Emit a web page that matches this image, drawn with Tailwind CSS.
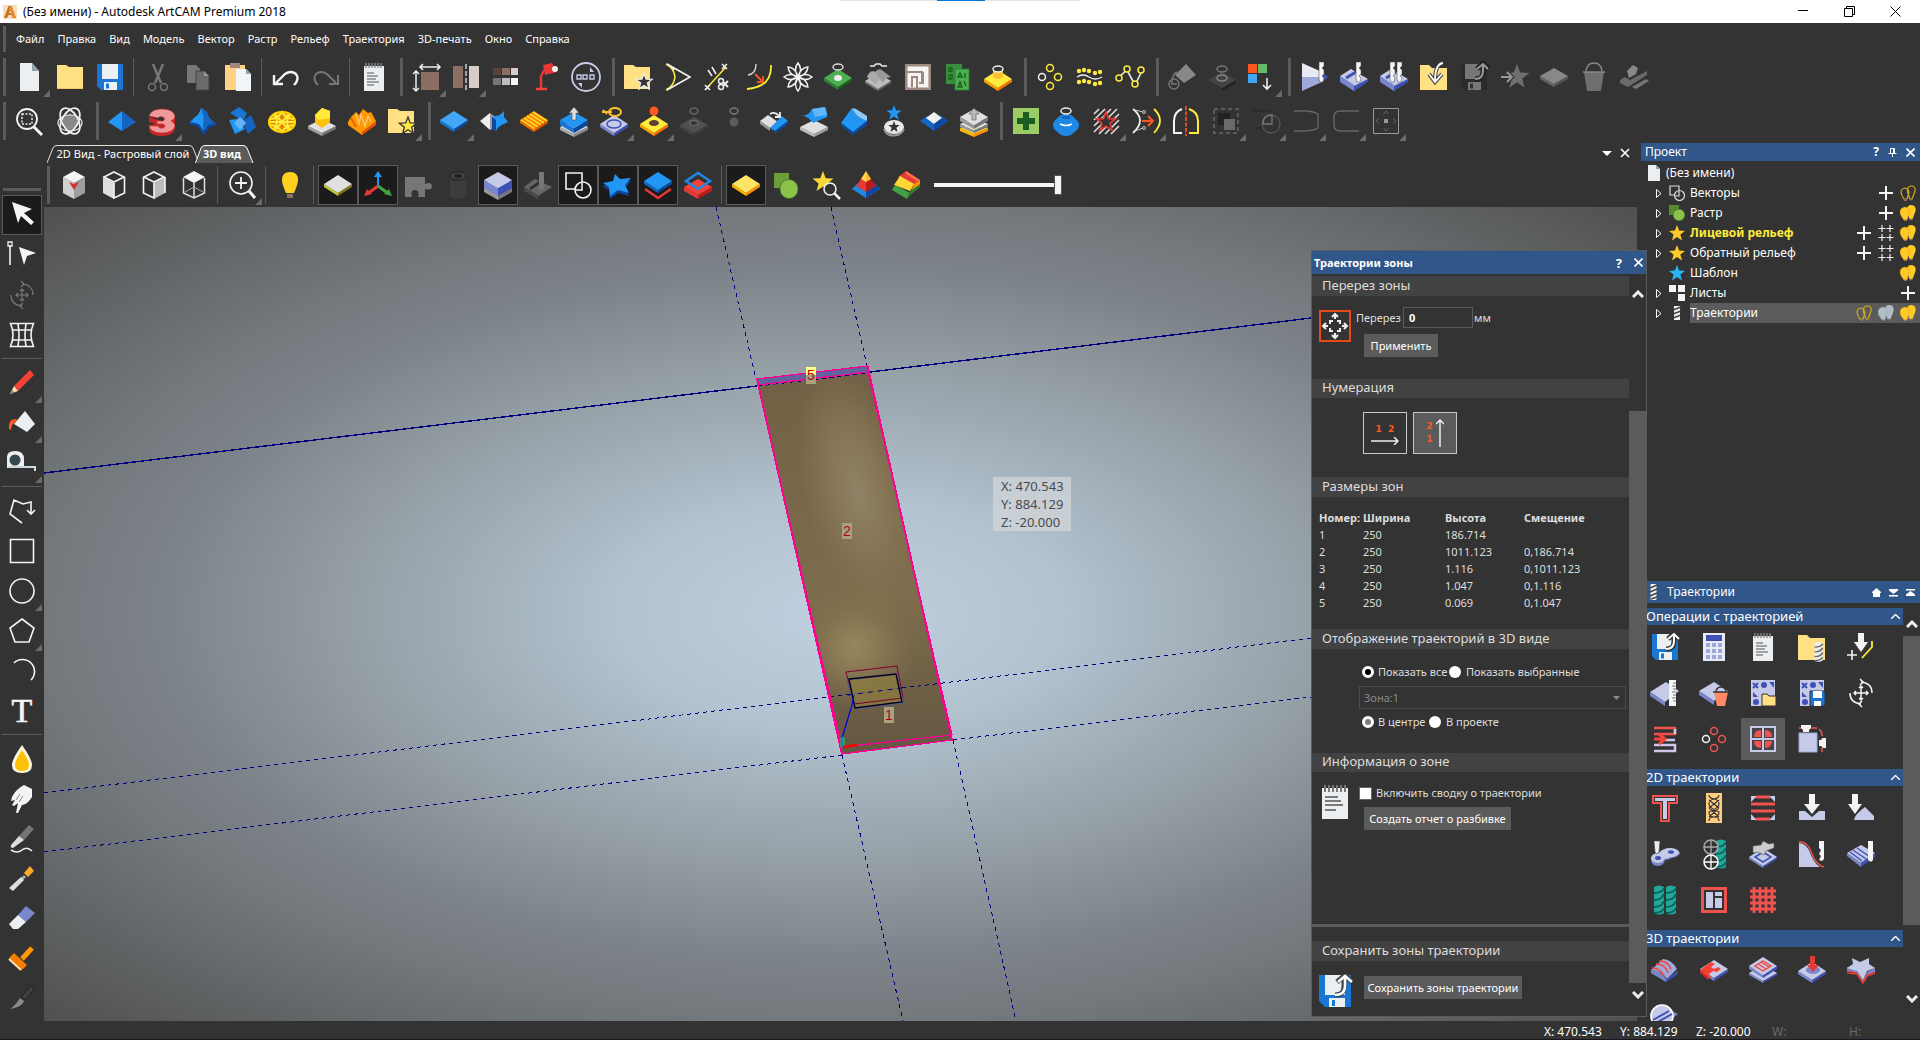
<!DOCTYPE html>
<html lang="ru">
<head>
  <meta charset="utf-8">
  <title>(Без имени) - Autodesk ArtCAM Premium 2018</title>
  <script src="https://cdn.jsdelivr.net/npm/@tailwindcss/browser@4"></script>
</head>
<body class="flex h-screen flex-col overflow-hidden bg-[#333333] font-['Noto_Sans',sans-serif] text-[11px] leading-4 text-white">

  <!-- title bar -->
  <header class="relative flex h-[23px] shrink-0 items-center bg-white pl-[3px] text-black">
    <svg class="size-[14px]" viewBox="0 0 14 14"><rect width="14" height="14" fill="#f8dcc0"/><path d="M1 13 5.500 1h3L13 13h-3.500L8.500 10H5.500L4 13z" fill="#c8701c"/><path d="M8.500 1 13 13H9.500L6 3z" fill="#e09038"/><path d="m6 8 1-3 1 3z" fill="#f8dcc0"/></svg>
    <h1 class="ml-[6px] text-[12px]">(Без имени) - Autodesk ArtCAM Premium 2018</h1>
    <div class="absolute top-0 left-[840px] flex h-px w-[241px] justify-center bg-[#e5e5e5]"><span class="h-px w-12 bg-[#0078d7]"></span></div>
    <div class="mr-[2px] ml-auto flex h-full">
      <button aria-label="Свернуть" class="grid w-[46px] place-items-center"><svg class="size-[11px]" viewBox="0 0 11 11" stroke="#000" fill="none"><path d="M0 4.500h10"/></svg></button>
      <button aria-label="Восстановить" class="grid w-[46px] place-items-center"><svg class="size-[11px]" viewBox="0 0 11 11" stroke="#000" fill="none"><path d="M.5 2.500h8v8h-8zM2.500 2.500v-2h8v8h-2"/></svg></button>
      <button aria-label="Закрыть" class="grid w-[46px] place-items-center"><svg class="size-[11px]" viewBox="0 0 11 11" stroke="#000" fill="none"><path d="m.5.500 10 10m0-10-10 10"/></svg></button>
    </div>
  </header>

  <!-- main menu -->
  <nav class="flex h-8 shrink-0 items-center">
    <span class="mr-1 ml-[3px] h-[26px] w-[3px] bg-[#5b5b5b]"></span>
    <div id="menu" class="flex gap-px"></div>
  </nav>

  <div id="bar-file" class="flex h-11 shrink-0 items-center"></div>
  <div id="bar-relief" class="flex h-11 shrink-0 items-center"></div>

  <main class="relative flex min-h-0 flex-1">

    <!-- tools -->
    <aside class="flex w-11 shrink-0 flex-col items-center pt-[45px]">
      <span class="mb-1 h-[3px] w-[38px] shrink-0 bg-[#5b5b5b]"></span>
      <div id="tools" class="flex flex-col items-center"></div>
    </aside>

    <!-- work area -->
    <section class="flex min-w-0 flex-1 flex-col">
      <div class="flex h-5 shrink-0 items-end pl-[3px]">
        <button class="relative h-[18px] w-[152px]">
          <svg class="absolute inset-0 h-full w-full" viewBox="0 0 152 18" fill="none" stroke="#e0e0e0"><path d="M0 18 6 3Q7 .5 10 .5H142Q145 .5 146 3L152 18"/></svg>
          <span class="relative block whitespace-nowrap leading-[18px]">2D Вид - Растровый слой</span>
        </button>
        <button class="relative -ml-[4px] h-[18px] w-[60px] font-bold">
          <svg class="absolute inset-0 h-full w-full" viewBox="0 0 60 18" fill="#5b5b5b" stroke="#fff"><path d="M.5 18 6 3Q7 .5 10 .5H48Q51 .5 52 3L58 18"/></svg>
          <span class="relative block whitespace-nowrap pr-[6px] leading-[18px]">3D вид</span>
        </button>
        <div class="mr-[7px] ml-auto flex h-5 items-center gap-2">
          <button aria-label="Список окон"><svg class="size-[10px]" viewBox="0 0 10 10" fill="#fff"><path d="M0 3h10L5 8z"/></svg></button>
          <button aria-label="Закрыть вид"><svg class="size-[10px]" viewBox="0 0 10 10" stroke="#fff" stroke-width="1.600"><path d="m1 1 8 8m0-8-8 8"/></svg></button>
        </div>
      </div>
      <div id="bar-view" class="flex h-11 shrink-0 items-center"></div>

      <div class="relative min-h-0 flex-1 bg-[radial-gradient(ellipse_farthest-corner_at_center,#c0d0e0_0%,#b2c2cf_20%,#90999f_47%,#7d838a_60%,#72787b_71%,#505050_100%)]">
        <svg class="absolute inset-0 h-full w-full" viewBox="44 207 1593 814" preserveAspectRatio="xMidYMid slice" font-family="Liberation Sans, sans-serif">
          <defs>
            <radialGradient id="shine" gradientUnits="userSpaceOnUse" cx="0" cy="0" r="1" gradientTransform="translate(858 492) rotate(-14) scale(55 130)"><stop offset="0" stop-color="#918166"/><stop offset=".5" stop-color="#857555"/><stop offset="1" stop-color="#857050" stop-opacity="0"/></radialGradient>
            <radialGradient id="shine2" gradientUnits="userSpaceOnUse" cx="855" cy="647" r="62"><stop offset="0" stop-color="#95875c"/><stop offset=".3" stop-color="#8b7c55"/><stop offset="1" stop-color="#857050" stop-opacity="0"/></radialGradient>
            <linearGradient id="wood" x1="0" y1="0" x2="0" y2="1"><stop offset="0" stop-color="#716045"/><stop offset=".6" stop-color="#7d6d4c"/><stop offset="1" stop-color="#645641"/></linearGradient>
          </defs>
          <path d="M757 379 868 366 952 740 842 754z" fill="url(#wood)"/>
          <path d="M757 379 868 366 952 740 842 754z" fill="url(#shine)"/>
          <path d="M757 379 868 366 952 740 842 754z" fill="url(#shine2)"/>
          <path d="m757 379 111-13 1 7-111 13z" fill="#62629c"/>
          <g stroke="#00007f" fill="none" shape-rendering="crispEdges">
            <path d="M44 473 757 386M870 372 1311 318" stroke-width="1.400"/>
            <path d="M716 207 756 379M831 207 867 366M842 755 903 1021M953 740 1016 1021M44 793 1311 638M44 852 842 755M953 740 1311 697M758 386 870 373" stroke-dasharray="4 4"/>
          </g>
          <g stroke="#ff0090" fill="none" stroke-width="1.300" shape-rendering="crispEdges">
            <path d="M757 379 867.500 366 952 740 842 754zM758 385 868 372 952 735M842 747 952 735M758 385 842 747" />
            <path d="M757 379 842 754M867.500 366 952 740" stroke-width="2"/>
          </g>
          <path d="m849 680 47-6 6 28-48 6z" fill="#8b7c40" fill-opacity=".8"/>
          <path d="m846 672 51-6 6 32-49 6z" stroke="#80002c" fill="none"/>
          <path d="m847 680 50-6 6 29-48 6z" stroke="#5c5c82" fill="none" stroke-width="1.500"/>
          <path d="m849 679 47-5 6 28-47 6z" stroke="#00001c" fill="none" stroke-width="1.300"/>
          <path d="m848 695 54-7" stroke="#00007f" stroke-dasharray="5 5"/>
          <path d="m854 695-2 10-10 33" stroke="#0000e0" fill="none" stroke-width="1.200"/>
          <path d="M841 738v9h3v-9z" fill="#00b060" stroke="#00e040"/>
          <path d="m843 747 14-2" stroke="#f00" stroke-width="2.500"/><path d="M842 736v11" stroke="#0060ff"/>
          <g font-size="14" text-anchor="middle" fill="#b00028">
            <rect x="806" y="367" width="10" height="8" fill="#ffff80"/><rect x="806" y="375" width="10" height="9" fill="#a6a27c"/>
            <text x="811" y="380">5</text>
            <rect x="842" y="523" width="10" height="16" fill="#a6a27c"/><text x="847" y="536">2</text>
            <rect x="884" y="707" width="10" height="16" fill="#a6a27c"/><text x="889" y="720">1</text>
          </g>
        </svg>
        <!-- cursor read-out -->
        <div class="absolute top-[270px] left-[949px] w-[78px] bg-[#d0d4d8]/80 pl-2 text-[13px] leading-[18px] text-[#4a4a4e]">
          <p>X: 470.543</p><p>Y: 884.129</p><p>Z: -20.000</p>
        </div>
      </div>
    </section>

    <!-- docked panels -->
    <aside class="ml-1 flex w-[279px] shrink-0 flex-col">
      <section class="h-[438px] shrink-0">
        <header class="flex h-[18px] items-center bg-[#315689] pl-1 text-[12px]">
          <h2>Проект</h2>
          <div class="mr-[5px] ml-auto flex items-center gap-[9px]">
            <button aria-label="Справка" class="font-bold">?</button>
            <button aria-label="Закрепить"><svg class="size-[9px]" viewBox="0 0 9 9" fill="none" stroke="#fff"><path d="M2.500 5.500v-5h4v5M5.500 1v4M.5 5.500h8M4.500 6v3"/></svg></button>
            <button aria-label="Закрыть"><svg class="size-[9px]" viewBox="0 0 9 9" stroke="#fff" stroke-width="1.600"><path d="m.5.500 8 8m0-8-8 8"/></svg></button>
          </div>
        </header>
        <ul id="tree" class="text-[12px]"></ul>
      </section>
      <section class="flex min-h-0 flex-1 flex-col">
        <header class="mb-[5px] flex h-[22px] shrink-0 items-center bg-[#315689] pl-[6px] text-[12px]">
          <svg class="size-4" viewBox="0 0 16 16"><rect x="3.500" width="6" height="16" rx="1" fill="#f4f4f4"/><path d="m3 4 7-3M3 8l7-3M3 12l7-3M4 15l6-2" stroke="#444" stroke-width="1.500"/></svg>
          <h2 class="ml-1">Траектории</h2>
          <div class="mr-[5px] ml-auto flex gap-2">
            <button aria-label="Домой"><svg class="size-[9px]" viewBox="0 0 9 9" fill="#fff"><path d="M4.500 0 9 4v1H8v4H1V5H0V4z"/></svg></button>
            <button aria-label="Свернуть все"><svg class="size-[9px]" viewBox="0 0 9 9" fill="#fff"><path d="M0 1h9v1.500L4.500 6 0 2.500zM0 7h9v1.500H0z"/></svg></button>
            <button aria-label="Развернуть все"><svg class="size-[9px]" viewBox="0 0 9 9" fill="#fff"><path d="M0 1h9v1.500H0zM4.500 3 9 6.500V8H0V6.500z"/></svg></button>
          </div>
        </header>
        <div class="flex min-h-0 flex-1">
          <div id="paths" class="min-w-0 flex-1 overflow-hidden"></div>
          <div class="flex w-[17px] flex-col items-center justify-between pt-3 pb-[18px]">
            <svg class="h-2 w-3 shrink-0" viewBox="0 0 12 8" fill="none" stroke="#eee" stroke-width="3"><path d="m1 7 5-5 5 5"/></svg>
            <span class="mt-2 mb-auto h-[289px] w-full bg-[#5b5b5b]"></span>
            <svg class="h-2 w-3 shrink-0" viewBox="0 0 12 8" fill="none" stroke="#eee" stroke-width="3"><path d="m1 1 5 5 5-5"/></svg>
          </div>
        </div>
      </section>
    </aside>

    <!-- zones window -->
    <form class="absolute top-[107px] right-[273px] bottom-[4px] flex w-[336px] flex-col border border-[#5b5b5b] bg-[#333333] text-[#dedede]">
      <header class="flex h-[23px] shrink-0 items-center bg-[#315689] pl-[2px] font-bold text-white">
        <h2>Траектории зоны</h2>
        <div class="mr-[3px] ml-auto flex items-center gap-3">
          <button type="button" aria-label="Справка" class="text-[13px]">?</button>
          <button type="button" aria-label="Закрыть"><svg class="size-[9px]" viewBox="0 0 9 9" stroke="#fff" stroke-width="1.600"><path d="m.5.500 8 8m0-8-8 8"/></svg></button>
        </div>
      </header>
      <div class="flex min-h-0 flex-1">
        <div class="flex min-w-0 flex-1 flex-col pt-[2px]">
          <section class="h-[103px] shrink-0">
            <h3 class="h-5 bg-[#424242] pl-[10px] text-[13px] leading-[18px]">Перерез зоны</h3>
            <div class="flex pt-[11px] pl-[7px]">
              <svg class="mt-[3px] size-8" viewBox="0 0 32 32" fill="none" stroke="#eee" stroke-width="2"><rect x="1" y="1" width="30" height="30" stroke="#e64a19"/><path d="M11 14v-3h3M18 11h3v3M21 18v3h-3M14 21h-3v-3M16 9V5M16 23v4M9 16H5M23 16h4M13 7l3-3 3 3M13 25l3 3 3-3M7 13l-3 3 3 3M25 13l3 3-3 3"/></svg>
              <div class="ml-[5px]">
                <div class="flex items-center">
                  <label for="overcut" class="w-[47px]">Перерез</label>
                  <input id="overcut" value="0" class="h-[21px] w-[70px] border border-[#5b5b5b] bg-[#333333] pl-[5px] font-bold text-white">
                  <span class="ml-px">мм</span>
                </div>
                <button type="button" class="mt-[6px] ml-2 h-[23px] w-[74px] bg-[#5b5b5b] text-white">Применить</button>
              </div>
            </div>
          </section>
          <section class="h-[98px] shrink-0">
            <h3 class="h-[19px] bg-[#424242] pl-[10px] text-[13px] leading-[17px]">Нумерация</h3>
            <div class="flex gap-[6px] pt-[14px] pl-[51px] font-['DejaVu_Sans',sans-serif] font-bold text-[#ff5722]">
              <button type="button" class="flex h-[42px] w-11 flex-col items-center border border-[#c8c8c8] pt-2 text-[9px] leading-4">1&nbsp; 2
                <svg class="h-2 w-7" viewBox="0 0 28 8" fill="none" stroke="#eee" stroke-width="1.500"><path d="M0 4h27m-4-4 4 4-4 4"/></svg></button>
              <button type="button" class="flex h-[42px] w-11 items-center justify-center gap-[3px] border border-[#c8c8c8] bg-[#5b5b5b] text-[9px] leading-[13px]"><span>2<br>1</span>
                <svg class="h-7 w-2" viewBox="0 0 8 28" fill="none" stroke="#eee" stroke-width="1.500"><path d="M4 28V1M0 5l4-4 4 4"/></svg></button>
            </div>
          </section>
          <section class="h-[152px] shrink-0">
            <h3 class="h-5 bg-[#424242] pl-[10px] text-[13px] leading-[18px]">Размеры зон</h3>
            <table class="mt-3 ml-[7px] text-left leading-[17px]">
              <thead><tr><th class="w-11">Номер:</th><th class="w-[82px]">Ширина</th><th class="w-[79px]">Высота</th><th>Смещение</th></tr></thead>
              <tbody>
                <tr><td>1</td><td>250</td><td>186.714</td><td></td></tr>
                <tr><td>2</td><td>250</td><td>1011.123</td><td>0,186.714</td></tr>
                <tr><td>3</td><td>250</td><td>1.116</td><td>0,1011.123</td></tr>
                <tr><td>4</td><td>250</td><td>1.047</td><td>0,1.116</td></tr>
                <tr><td>5</td><td>250</td><td>0.069</td><td>0,1.047</td></tr>
              </tbody>
            </table>
          </section>
          <section class="h-[124px] shrink-0">
            <h3 class="h-5 bg-[#424242] pl-[10px] text-[13px] leading-[18px]">Отображение траекторий в 3D виде</h3>
            <div class="flex items-center pt-[15px] pl-[50px]">
              <input type="radio" name="show" id="show-all" checked class="size-3 appearance-none rounded-full bg-white checked:border-[3px] checked:border-white checked:bg-black">
              <label for="show-all" class="w-[75px] pl-1 whitespace-nowrap">Показать все</label>
              <input type="radio" name="show" id="show-sel" class="size-3 appearance-none rounded-full bg-white checked:border-[3px] checked:border-white checked:bg-black">
              <label for="show-sel" class="pl-[5px]">Показать выбранные</label>
            </div>
            <div class="relative mt-[6px] ml-[47px] w-[267px]">
              <select aria-label="Зона" disabled class="h-[23px] w-full appearance-none border border-[#4a4a4a] bg-[#333333] pl-1 text-[#8a8a8a]"><option>Зона:1</option></select>
              <svg class="absolute top-[10px] right-[6px] h-1 w-[7px]" viewBox="0 0 7 4" fill="#8a8a8a"><path d="M0 0h7L3.500 4z"/></svg>
            </div>
            <div class="flex items-center pt-[5px] pl-[50px]">
              <input type="radio" name="place" id="center" checked class="size-3 appearance-none rounded-full border-[3px] border-white bg-[#7a7a7a]">
              <label for="center" class="w-[55px] pl-1 whitespace-nowrap">В центре</label>
              <input type="radio" name="place" id="project" class="size-3 appearance-none rounded-full bg-white">
              <label for="project" class="pl-[5px]">В проекте</label>
            </div>
          </section>
          <section class="min-h-0 flex-1">
            <h3 class="h-[19px] bg-[#424242] pl-[10px] text-[13px] leading-[17px]">Информация о зоне</h3>
            <div class="flex pt-[13px] pl-[10px]">
              <svg class="h-[34px] w-[26px]" viewBox="0 0 26 34"><path d="M0 3h26v31H0z" fill="#eceff1"/><path d="M3 0v7m4-7v7m4-7v7m4-7v7m4-7v7m4-7v7" stroke="#777" stroke-width="2"/><path d="M3 12h13M3 16h16M3 20h18M3 25h11" stroke="#555" stroke-width="1.400"/></svg>
              <div class="ml-[11px]">
                <div class="flex items-center">
                  <input type="checkbox" id="summary" class="size-[13px] appearance-none border border-[#666] bg-white">
                  <label for="summary" class="pl-1">Включить сводку о траектории</label>
                </div>
                <button type="button" class="mt-[6px] ml-[5px] h-[23px] w-[147px] bg-[#5b5b5b] whitespace-nowrap text-white">Создать отчет о разбивке</button>
              </div>
            </div>
          </section>
          <section class="h-[92px] shrink-0 border-t-[3px] border-[#5b5b5b] pt-[14px]">
            <h3 class="h-5 bg-[#424242] pl-[10px] text-[13px] leading-[18px]">Сохранить зоны траектории</h3>
            <div class="flex pt-[13px] pl-[7px]">
              <svg class="h-[33px] w-[34px]" viewBox="0 0 34 33"><path d="M0 1h32v32H6l-6-6z" fill="#1976d2"/><path d="M6 1h20v20H6z" fill="#eceff1"/><path d="M10 24h16v9H10z" fill="#eceff1"/><path d="M13 26h3v6h-3z" fill="#1976d2"/><path d="M16 21c7 0 9-3 9-9V6M18 8l8-7 7 7" fill="none" stroke="#444" stroke-width="5"/><path d="M16 21c7 0 10-3 10-9V3M19 8l7-6 7 6" fill="none" stroke="#fff" stroke-width="2.500"/></svg>
              <button type="button" class="mt-[2px] ml-[11px] h-[23px] w-[158px] bg-[#5b5b5b] whitespace-nowrap text-white">Сохранить зоны траектории</button>
            </div>
          </section>
        </div>
        <div class="flex w-[17px] flex-col items-center pt-[16px]">
          <svg class="mb-[113px] h-2 w-3 shrink-0" viewBox="0 0 12 8" fill="none" stroke="#eee" stroke-width="3"><path d="m1 7 5-5 5 5"/></svg>
          <span class="min-h-0 w-full flex-1 bg-[#5b5b5b]"></span>
          <svg class="mt-[8px] mb-[17px] h-2 w-3 shrink-0" viewBox="0 0 12 8" fill="none" stroke="#eee" stroke-width="3"><path d="m1 1 5 5 5-5"/></svg>
        </div>
      </div>
    </form>
  </main>

  <footer class="flex h-[19px] shrink-0 items-center justify-end border-b border-[#1c1420] pt-1 text-[12px]">
    <span class="w-[76px]">X: 470.543</span><span class="w-[76px]">Y: 884.129</span><span class="w-[76px]">Z: -20.000</span>
    <span class="w-[77px] text-[#6a6a6a]">W:</span><span class="w-[71px] text-[#6a6a6a]">H:</span>
  </footer>

  <script>
    // ---- drawing helpers, every icon lives in a 32x32 box ----
    const P = (d, fill, extra = '') => `<path d="${d}" fill="${fill}" ${extra}/>`
    const L = (d, stroke, w = 1.5, extra = '') => `<path d="${d}" fill="none" stroke="${stroke}" stroke-width="${w}" ${extra}/>`
    const C = (x, y, r, fill, stroke = 'none', w = 1.5) => `<circle cx="${x}" cy="${y}" r="${r}" fill="${fill}" stroke="${stroke}" stroke-width="${w}"/>`
    const E = (x, y, rx, ry, fill, stroke = 'none', w = 1.5) => `<ellipse cx="${x}" cy="${y}" rx="${rx}" ry="${ry}" fill="${fill}" stroke="${stroke}" stroke-width="${w}"/>`
    const slab = (x, y, w, h, t, top, left, right) =>
      P(`M${x - w} ${y}L${x} ${y + h}v${t}L${x - w} ${y + t}z`, left) +
      P(`M${x + w} ${y}L${x} ${y + h}v${t}L${x + w} ${y + t}z`, right) +
      P(`M${x} ${y - h}L${x + w} ${y} ${x} ${y + h} ${x - w} ${y}z`, top)
    const starPath = (x, y, r, k = 0.42, n = 5) => {
      let d = ''
      for (let i = 0; i < n * 2; i++) {
        const a = Math.PI * i / n - Math.PI / 2, q = i % 2 ? r * k : r
        d += (i ? 'L' : 'M') + (x + q * Math.cos(a)).toFixed(1) + ' ' + (y + q * Math.sin(a)).toFixed(1)
      }
      return d + 'z'
    }
    const folder = P('M2 4h9l3 3h15v22H2z', '#ffe082')
    const floppy = (a, b) => P('M3 3h26v26H7l-4-4z', a) + P('M8 3h16v15H8z', b) + P('M10 21h13v8H10z', b) + P('M12 22.500h3v5h-3z', a)
    const arrowUp = (c, o) => L('M17 18c6 0 8-3 8-8V4M19 8l6-6 6 6', o, 5) + L('M17 18c6 0 8-3 8-8V4M19 8l6-5 5 5', c, 2)
    const cube = (t, l, r) => P('M16 2 27 8 16 14 5 8z', t) + P('M5 8 16 14V30L5 24z', l) + P('M27 8 16 14V30L27 24z', r)
    const plate = '#c5cae9', plateD = '#7986cb', blue = '#3f51b5', red = '#ef5350'
    const mill = (x) => P(`M${x} 1h5v4l-2 2 2 2v4l-2 2 2 2-1 4h-3l-1-3z`, '#f4f4f4', 'stroke="#444" stroke-width=".5"')
    const helix = (x, a, b) => P(`M${x} 3q5-3 10 0v26q-5 3-10 0z`, a) + L(`M${x} 9q8 0 10-5M${x} 16q8 0 10-6M${x} 23q8 0 10-6M${x} 29q8 0 10-5`, b, 2)
    const grid9 = P('M4 3h24v26H4z', plate) + L('m6 6 5 5m0-5-5 5', blue, 2) + C(17, 8, 3, blue) + P('M22 5h5v6z', blue) + P('M6 15v5h5z', blue) + C(9, 25, 3, blue)

    const icons = {
      doc: P('M6 2h12l7 8v20H6z', '#eceff1') + P('M18 2v8h7z', '#90a4ae'),
      folder: P('M3 4h9l3 2h14v22H3z', '#ffe082') + L('M3 27.500h26', '#f0c868', 1),
      save: floppy('#1976d2', '#eceff1'),
      cut: L('M11 3 19 22M21 3 13 22', '#777', 2.5) + C(10, 26, 3.5, 'none', '#777', 1.5) + C(22, 26, 3.5, 'none', '#777', 1.5),
      copy: P('M5 4h9l4 4v14H5z', '#777') + P('M14 10h8l5 5v14H14z', '#6a6a6a', 'stroke="#444"') + P('M22 10v5h5z', '#999'),
      paste: P('M3 4h20v25H3z', '#ffd180') + P('M8 2h10v5H8z', '#a1887f') + P('M14 8h10l5 5v17H14z', '#f1f4f8') + P('M24 8v5h5z', '#90a4ae'),
      undo: L('M24 24q6-6 2-11-5-4-11 0l-9 9M4 14v9h9', '#f4f4f4', 2.4),
      redo: L('M8 24q-6-6-2-11 5-4 11 0l9 9M28 14v9h-9', '#777', 2),
      notes: P('M6 5h20v25H6z', '#eceff1') + L('M8 2v5m3-5v5m3-5v5m3-5v5m3-5v5m3-5v5', '#888', 1.4) + L('M9 12h7M9 15h11M9 18h9M9 21h12M9 24h7', '#555', 1.2),
      resize: P('M11 11h18v18H11z', '#8d6e63') + L('M11 6h18M13 3l-3 3 3 3M27 3l3 3-3 3M6 11v18M3 13l3-3 3 3M3 27l3 3 3-3', '#eee', 1.5),
      mirror: P('M3 5h10v22H3z', '#8d6e63') + P('M19 5h10v22H19z', '#d7ccc8') + L('M16 3v27', '#ccc', 1.5, 'stroke-dasharray="5 2"'),
      palette: P('M3 7h8v7H3z', '#5d4037') + P('M12 7h8v7h-8z', '#8d6e63') + P('M21 7h7v7h-7z', '#d7ccc8') + P('M3 17h8v7H3z', '#757575') + P('M12 17h8v7h-8z', '#bdbdbd') + P('M21 17h7v7h-7z', '#f5f5f5'),
      lamp: P('m13 4 9-2 5 9-12 3z', '#e53935') + C(25, 8, 3, '#eee') + L('M15 8 11 15V27', '#e53935', 2.5) + L('M6 28h11', '#f44336', 2.5),
      badge: C(16, 16, 14, 'none', '#c5cae9', 1.8) + L('M7 14h4v4H7zM13 14h4v4h-4zM20 14h4v4h-4z', '#c5cae9', 1.4) + P('M20 6v5h4zM12 27v-5H8z', '#c5cae9'),
      folderStar: P('M2 4h9l3 2h14v22H2z', '#ffe082') + P(starPath(22, 21, 8.500), '#333', 'stroke="#eee" stroke-width="1.300"'),
      fork: L('M4 3q8 4 9 13Q12 25 4 29', '#ffeb3b', 1.6) + L('M5 3 28 16 5 29M5 3q6 3 7 6', '#f4f4f4', 1.6),
      trim: L('M3 29 24 6', '#ffeb3b', 1.5) + L('M6 9l4 6M10 6l4 7M20 3l5 5m0-5-5 5M3 24l5 5m0-5-5 5', '#eee', 1.6) + C(19, 20, 2.500, 'none', '#eee') + C(19, 26, 2.500, 'none', '#eee') + L('m21 21 5 5m0-6-5 5', '#eee', 2),
      fillet: L('M29 4q1 22-24 24', '#ffeb3b', 1.8) + L('M6 14q8-1 8-11', '#ccc', 1.5) + L('m13 13 8 8m0-6v6h-6', '#ff5722', 1.8),
      flower: L([0, 45, 90, 135, 180, 225, 270, 315].map(a => { const r = a * Math.PI / 180, c = Math.cos(r), s = Math.sin(r), f = (u, v) => (16 + u * c - v * s).toFixed(1) + ' ' + (16 + u * s + v * c).toFixed(1); return `M16 16Q${f(8, 5)} ${f(14, 0)}Q${f(8, -5)} 16 16` }).join(''), '#f4f4f4', 1.500),
      greenRing: slab(16, 17, 14, 9, 3, '#4caf50', '#2e7d32', '#1b5e20') + E(16, 17, 4, 3, '#eee') + E(16, 6, 5, 3, 'none', '#ddd', 1.4),
      bumps: slab(16, 20, 13, 8, 2, '#bdbdbd', '#757575', '#616161') + P('M5 16Q8 8 14 11l8 6q-5-1-8 7z', '#aaa') + P('M13 11q4-5 8-1l8 6q-6 0-8 6z', '#999') + L('M8 5h4l2-2h4l2 2h5', '#eee', 1.5),
      maze: P('M3 3h26v26H3z', '#a1887f') + P('M5.500 5.500h21v21h-21z', '#f5f5f5') + L('M5 11h15v10M15 11v0M10 26V16h5v11M21 11v11h-4M26 11h0', '#a1887f', 2),
      cards: P('M4 3h16v20H4z', '#388e3c') + P('M13 8h14v21H13z', '#4caf50', 'stroke="#2e7d32"') + L('m16 16 2-4 2 4zM23 12v5M16 26l2-5 2 5zM22 20l2 5M7 7h3v3H7zM7 14h3v4H7z', '#1b5e20', 1.4),
      yellowRing: slab(16, 18, 14, 9, 3, '#ffeb3b', '#ffa000', '#ff6f00') + P('M11 9v7q5 4 10 0V9z', '#fbc02d') + E(16, 8, 5, 3, '#333', '#eee', 1.5),
      rings: C(16, 7, 3.500, 'none', '#ffeb3b') + C(8, 16, 3.500, 'none', '#f4f4f4') + C(24, 16, 3.500, 'none', '#ffeb3b') + C(16, 25, 3.500, 'none', '#ffeb3b'),
      wave: [5, 10, 15, 21, 26].map((x, i) => { const o = [0, -1, 0, 2, 1][i]; return C(x, 10 + o, 2.200, '#ffeb3b') + C(x, 21 + o, 2.200, '#ffeb3b') }).join('') + L('M3 16q6-4 12 0t13 0', '#eee', 1.4),
      zigzag: L('M5 16 13 9 21 24 28 10', '#eee', 1.6) + C(5, 17, 3, '#333', '#ffeb3b') + C(13, 8, 3, '#333', '#ffeb3b') + C(21, 23, 3, '#333', '#ffeb3b') + C(27, 9, 3, '#333', '#ffeb3b'),
      fillDim: P('M20 3 30 14 18 22 9 14z', '#888') + L('M11 11q-5 2-5 11', '#777', 1.5) + C(8, 23, 5, 'none', '#777') + L('M5 23h6', '#777', 1.5),
      ringDim: slab(16, 19, 14, 8, 3, '#444', '#333', '#222') + E(16, 17, 5, 3, 'none', '#888') + E(16, 8, 5, 3, 'none', '#777'),
      swatches: P('M2 3h9v9H2z', '#ff5722') + P('M12 3h9v9h-9z', '#66bb6a') + P('M2 13h9v9H2z', '#42a5f5') + L('M21 17v11m-4-4 4 4 4-4', '#eee', 1.6),
      cone: P('M4 2 24 11v5H4z', '#e8eaf6') + P('M4 30 24 21v-5H4z', '#9fa8da') + P('M24 11l6 5-6 5z', '#3f51b5') + mill(21),
      slab1: P('M2 15 13 8l17 10-13 8z', plate) + P('M2 15v6l14 9V24z', plateD) + P('M30 18v3L16 30v-5z', blue) + L('m8 17 10-6', blue, 3) + mill(18),
      slab2: P('M2 15 13 8l17 10-13 8z', plate) + P('M2 15v6l14 9V24z', plateD) + P('M30 18v3L16 30v-5z', blue) + L('m8 17 10-6', blue, 3) + mill(12) + mill(19),
      folderIn: folder + L('M25 2q-8 1-8 18m-6-7 6 8 7-8', '#444', 4) + L('M25 2q-8 1-8 18m-6-7 6 8 7-8', '#fff', 1.8),
      saveDim: P('M3 3h26v26H7l-4-4z', '#2b2b2b') + P('M7 3h17v15H7z', '#777') + P('M10 21h13v8H10z', '#777') + P('M12 22.500h3v5h-3z', '#333') + arrowUp('#999', '#222'),
      starDim: P(starPath(19, 16, 13), '#6f6f6f') + L('M3 16h11m-5-5 5 5-5 5', '#333', 4) + L('M3 16h11m-5-5 5 5-5 5', '#999', 1.800),
      slabDim: slab(16, 15, 14, 8, 3, '#888', '#666', '#555'),
      bucketDim: P('M6 11h20l-3 19H9z', '#6f6f6f') + L('M5 11h22M8 10q1-8 8-8t8 8', '#888', 1.5),
      partsDim: P('m2 19 5-3 5 3 17-9v4L10 26 2 22z', '#6a6a6a') + P('m9 10 6-6 5 3-2 6-7 4z', '#888') + P('m14 26 14-8 3 2-13 8z', '#777'),

      zoomBox: C(13, 14, 10, 'none', '#f4f4f4', 1.800) + L('m20 22 8 8', '#f4f4f4', 3) + L('M8 9h10v10H8z', '#eee', 1.500, 'stroke-dasharray="2 1.500"'),
      orbit: P('m16 8 7 5v8l-7 5-7-5v-8z', '#888') + E(16, 18, 12, 8, 'none', '#ddd', 1.200) + `<g transform="rotate(60 16 16)">${E(16, 16, 14, 8, 'none', '#eee', 1.800)}</g><g transform="rotate(-60 16 16)">${E(16, 16, 14, 8, 'none', '#eee', 1.800)}</g>`,
      bluePyramid: P('M16 6 2 17 16 26z', '#2196f3') + P('M16 6 30 17 16 26z', '#1565c0'),
      roll: P('M3 12v5l8 2h8v-2zM3 20v5q2 6 13 6t13-7V11l-5 6z', '#c62828') + P('M3 11q2-7 13-7t13 7q0 3-4 5 4 2 4 5-2 7-13 7-11 0-13-7h9q1 3 5 2 4-2 0-4h-6v-3h6q3-2 0-4-4-1-5 1z', '#ef9a9a', 'stroke="#c62828" stroke-width=".6"'),
      tent: P('m3 18 6-6q4-2 6-9 6 2 8 10l7 6-7 2-5 7-6-8z', '#2196f3') + P('M15 3q4 9 2 17l1 8 5-7 7-2-7-6Q21 5 15 3z', '#1565c0') + L('m3 18 9 2 6 8 5-7 7-2', '#0d47a1', 2.500),
      peaks: P('m4 8 9-6 8 6-4 8z', '#1976d2') + P('M3 15 12 14l7 10-10 5z', '#2196f3') + P('m16 16 9-6 5 12-8 7z', '#1565c0') + P('m8 18 6-6 6 6-6 7z', '#64b5f6'),
      knot: E(16, 17, 14, 11, '#e08600') + L('M4 14q8 0 12-7 4 7 12 7M4 20q8 0 12 7 4-7 12-7M7 9q4 4 4 8t-4 8M25 9q-4 4-4 8t4 8M9 9l14 16M23 9 9 25M3 17h26', '#ffeb3b', 2) + E(16, 17, 13, 10, 'none', '#ffd600', 2),
      relief: slab(16, 21, 14, 7, 3, '#e0e0e0', '#9e9e9e', '#757575') + P('m9 10 7-7 8 3v11l-8 6-7-5z', '#ffc107') + P('m16 3 8 3v7l-12 2-3-5z', '#ffeb3b'),
      ridge: P('m2 17 3-5 5-5 3 3 4-6 5 4 3-1 5 9v3L16 30 2 20z', '#ff9800') + P('m16 27 14-11v4L16 30z', '#e65100') + L('m10 9 3 10 2-9 4 11 3-10 3 6', '#ffcc80', 1.200) + L('m5 13 5 9', '#e65100', 1.500),
      folderFill: P('M2 4h9l3 2h14v22H2z', '#ffe082') + P(starPath(22, 21, 9), '#ffeb3b', 'stroke="#333" stroke-width="1.300"'),
      blueSlab: slab(16, 15, 14, 9, 3, '#42a5f5', '#1976d2', '#0d47a1'),
      fold: P('M2 16 12 8v17z', '#eee') + P('M12 8 16 11v12l-4 2z', '#999') + P('m14 12 3-1q5 0 9-5v6l4 5-4 2q-6 2-8 7l-4-2z', '#2196f3') + P('m14 12 4 3v11l-4-2z', '#0d47a1'),
      stripes: slab(16, 15, 14, 9, 3, '#fb8c00', '#ef6c00', '#e65100') + L('m3 15 14 9M6 13l14 9M9 11l14 9M12 9l14 9M15 7l14 9', '#ffeb3b', 1.200),
      layersUp: slab(16, 22, 14, 7, 3, '#ddd', '#aaa', '#888') + slab(16, 15, 14, 8, 5, '#2196f3', '#1976d2', '#0d47a1') + P('M16 2 21 8h-3v7h-4V8h-3z', '#ddd', 'stroke="#555" stroke-width=".6"'),
      ringSlab: slab(16, 19, 14, 9, 3, plate, plateD, blue) + E(16, 19, 7, 4, 'none', blue) + E(17, 7, 6, 4, 'none', '#fbc02d', 2) + L('M4 7h10M5 5l4 4', '#fbc02d', 1.800),
      yellowHole: slab(16, 19, 14, 9, 3, '#ffeb3b', '#ffa000', '#ff6f00') + E(16, 18, 5, 3, '#5d4037') + C(16, 6, 4.500, '#ff5722'),
      holeDim: slab(16, 20, 14, 8, 3, '#505050', '#444', '#3a3a3a') + E(16, 18, 4, 2.500, '#333', '#666') + E(16, 6, 4, 3, 'none', '#666'),
      dotDim: E(16, 6, 4, 3, 'none', '#777') + C(16, 17, 4.500, '#5c5c5c'),
      swap: P('M2 16 10 10l10 7-8 6z', '#e0e0e0') + P('M12 23 24 11l6 5-13 10z', '#2196f3') + P('m2 16 10 7v3L2 19z', '#999') + P('m17 26 13-10v3L17 29z', '#0d47a1') + L('M12 9q5-3 9 2m1-4v5h-5', '#eee', 1.800),
      flag: slab(16, 22, 14, 7, 3, '#e0e0e0', '#bdbdbd', '#9e9e9e') + P('M3 10Q10 12 14 4l13-2q3 8 2 10l-14 6q-4-6-12-8z', '#2196f3') + P('m14 4 13-2 2 8-12 2z', '#64b5f6'),
      curve: P('M3 18 14 3q3 9 15 13l-14 11z', '#2196f3') + P('M14 3q3 9 15 13V11L18 4z', '#90caf9') + P('m3 18 12 9v3L3 21zM15 27l14-11v4L15 30z', '#0d47a1'),
      stamp: P(starPath(16, 8, 8), '#2196f3') + E(16, 22, 10, 7, '#e8e8e8') + P(starPath(16, 22, 6), '#333') + L('M6 24q3 7 10 6.500T26 24', '#999', 2),
      cut4: P('M2 16 9 11h14l7 5-14 10z', '#1565c0') + P('M16 7 24 13 16 19 8 13z', '#f0f0f0') + P('M30 16 16 26V19l8-6z', '#0d47a1'),
      stack: slab(16, 23, 14, 6, 3, '#ffeb3b', '#ffb300', '#ff8f00') + slab(16, 19, 14, 6, 3, '#e0e0e0', '#999', '#777') + slab(16, 12, 14, 8, 4, '#e0e0e0', '#999', '#777') + P('m16 3 5 6h-3v6h-4V9h-3z', '#bbb', 'stroke="#555" stroke-width=".6"'),
      plus: P('M3 3h26v26H3z', '#9ccc65') + P('M13 7h6v6h6v6h-6v6h-6v-6H7v-6h6z', '#1b5e20'),
      pouch: C(16, 20, 11, '#1e88e5') + E(16, 20, 13, 9, '#1e88e5') + E(16, 6, 5, 3, 'none', '#eee', 1.5) + P('M12 11h8v3h-8z', '#1565c0') + L('M10 19q6 3 12 0', '#fff', 1.400),
      hatchStar: L('M4 9 9 4M4 15 15 4M4 21 21 4M4 27 27 4M9 29 29 9M15 29 29 15M21 29l8-8', '#ddd', 1.600) + P(starPath(16, 17, 10), '#333', 'stroke="#e53935" stroke-width="1.600"'),
      morph: L('M3 4q14 11 0 24', '#eee', 1.800) + C(14, 7, 1.500, 'none', '#ccc', 1) + C(14, 23, 1.500, 'none', '#ccc', 1) + L('M5 5l8 2M5 26l8-3', '#ccc', 1) + L('M12 16h11m-5-5 5 5-5 5', '#ff5722', 2) + L('M24 4q12 11 0 24', '#ffeb3b', 1.800),
      arch: L('M12 4q-8 3-8 12v12h8', '#f4f4f4', 2) + L('M19 4q9 3 9 12v12h-9', '#ffeb3b', 2) + L('M16 1v30', '#ff5722', 1.600, 'stroke-dasharray="4 1.500"'),
      groupDim: L('M4 4h24v24H4z', '#5a5a5a', 2, 'stroke-dasharray="4 3"') + P('M8 8h12v12H8z', '#222') + P('M14 14h11v11H14z', '#6a6a6a'),
      weldDim: L('M2 6h19M2 23h12', '#2a2a2a', 1.400) + C(21, 19, 9, 'none', '#555', 1.300) + L('M13 19q0-9 9-9v9z', '#777', 1.300),
      taperDim: L('M4 6h12q10 1 12 3v14q-2 2-12 3H4', '#666', 1.300),
      slotDim: L('M29 6H10q-6 0-6 6v8q0 6 6 6h19', '#666', 1.500),
      centerDim: L('M3.500 3.500h25v25h-25z', '#999', 1) + P('M14 14h4v4h-4z', '#999') + L('m13.500 9 2.500-3 2.500 3M13.500 23l2.500 3 2.500-3M9 13.500l-3 2.500 3 2.500M23 13.500l3 2.500-3 2.500', '#666', 1),

      cubeRed: cube('#f4f4f4', '#d0d0d0', '#9e9e9e') + P('m11 13 5 2 5-2-5 8z', '#d32f2f'),
      cubeLeft: P('M5 8 16 14V30L5 24z', '#ddd') + L('M16 3 26 8 16 13 6 8zM26.500 8v16L16 29V14', '#f4f4f4', 1.600),
      cubeRight: P('M27 8 16 14V30L27 24z', '#bbb') + L('M16 3 26 8 16 13 6 8zM5.500 8v16L16 29V14M27 8v16', '#f4f4f4', 1.600),
      cubeTop: P('M16 2 27 8 16 14 5 8z', '#f4f4f4') + L('M5.500 9v15L16 29l10.500-5V9M16 14v15', '#e0e0e0', 1.500) + L('m7 23 9-5 9 5', '#aaa', 1),
      zoomIn: C(15, 14, 11, 'none', '#f4f4f4', 1.600) + L('m23 22 6 7', '#f4f4f4', 3) + L('M15 8v12M9 14h12', '#f4f4f4', 1.800),
      bulb: P('M16 3q8 0 8 8 0 4-4 13h-8Q8 15 8 11q0-8 8-8z', '#ffd020') + P('M13 25h6v4h-6z', '#8d6e63'),
      whiteSlab: slab(16, 15, 14, 9, 3, '#e0e0e0', '#c0ca33', '#827717'),
      axes: P('M16 2 20 8h-3v10h-2V8h-3z', '#2196f3') + L('M16 17 5 25', '#e53935', 3) + L('m16 17 11 8', '#43a047', 3) + P('m2 27 3-7 5 5z', '#e53935') + P('m30 27-3-7-5 5z', '#43a047'),
      puzzle: P('M3 8h20v7q6-3 7 2 0 5-7 3v8h-7q2-7-3-7t-3 7H3z', '#777'),
      pipe: P('M8 7v20q8 6 16 0V7z', '#3c3c3c') + E(16, 7, 8, 4, '#444', '#2a2a2a') + E(16, 7, 4, 2, '#222'),
      block: slab(16, 15, 14, 8, 8, '#bbb', '#999', '#777') + slab(16, 11, 14, 8, 8, plate, plateD, blue),
      millDim: P('M2 18 13 10l17 8-14 9z', '#666') + P('M2 18v4l14 8v-4z', '#4a4a4a') + L('m8 20 10-7', '#333', 3) + P('M17 3h5v16l-3 3-2-3z', '#777'),
      shapes: L('M4 4h16v16H4z', '#f4f4f4', 1.600) + C(21, 21, 8, '#1b1b1b', '#f4f4f4', 1.600) + L('M20 14v7h-7', '#f4f4f4', 1.500),
      blueStar: P('m13 6 5 5 11-1-6 7 4 8-11-3-8 6-1-9-7-4 11-2z', '#0d47a1', 'transform="translate(0 2)"') + P('m13 5 5 5 11-1-6 7 4 8-11-3-8 6-1-9-6-4 10-2z', '#2196f3'),
      blueRed: L('m3 20 13 9 13-9', '#e53935', 2.500) + slab(16, 12, 14, 9, 3, '#2196f3', '#1565c0', '#0d47a1'),
      redBlue: slab(16, 18, 14, 8, 4, '#f44336', '#e53935', '#b71c1c') + L('M16 4 28 12 16 20 4 12z', '#1e88e5', 2.500),
      goldSlab: slab(16, 15, 14, 9, 3, '#ffe566', '#ffb300', '#ff8f00'),
      bitmap: P('M4 4h15v15H4z', '#689f38') + E(19, 20, 9, 9.500, '#8bc34a', '#4f6f30', .8),
      starZoom: P(starPath(13, 13, 11), '#fdd835') + C(20, 20, 6, '#333', '#f4f4f4') + L('m24 24 6 6', '#f4f4f4', 2.500),
      pyramid: P('m2 20 5-5h18l5 5-14 9z', '#1e88e5') + P('m16 29 14-9-5-5-9 6z', '#0d47a1') + P('M6 17 16 3v20z', '#e53935') + P('M26 17 16 3v20z', '#b71c1c') + P('m11 10 5-8v11z', '#ffd54f') + P('m16 2 5 8-5 3z', '#fbc02d'),
      rainbow: P('m8 8 8-6 14 9-7 5z', '#e53935') + P('m4 16 6-9 16 9-6 6z', '#fdd835') + P('m2 21 3-5 15 8-3 6z', '#43a047') + P('m16 2 14 9v3l-14-9z', '#ff7043') + P('m24 15 6-4v7L16 30l4-8z', '#2e7d32') + P('m24 15 6-4v4l-8 6z', '#ff8f00'),

      cursor: P('M6 3 26 10 18 14 28 23 25 26 15 17 12 24z', '#f4f4f4'),
      node: L('M4 6v20', '#ccc', 2) + L('M2 5h4v4H2z', '#eee', 1.300, 'transform="translate(0 -2)"') + P('M13 8 30 14 21 17 18 26z', '#f4f4f4'),
      moveDim: L('M16 5q11 1 11 11M16 27Q5 26 5 16', '#777', 1.200) + L('m15 2 3 3-3 3M17 24l-3 3 3 3M16 10v12M10 16h12M14 12l2-2 2 2M14 20l2 2 2-2M12 14l-2 2 2 2M20 14l2 2-2 2', '#777', 1.200),
      mesh: L('M4.500 4.500h23q-5 11 0 23h-23q5-12 0-23zM12 5q2 11 0 22M20 5q-2 11 0 22M6 11h20M6 21h20', '#f4f4f4', 1.600),
      pencil: P('M24 3 28 8 12 24 8 19z', '#f44336') + P('m8 19 4 5-8 3z', '#ffe0b2') + P('m4 27 3-4 1 3z', '#777'),
      bucket: P('M19 4 29 17 21 25 8 17z', '#eceff1') + P('M9 12q-7 0-6 10l2 1q0-6 7-10z', '#ff5722'),
      tape: P('M1 10q0-6 8-6 9 0 9 8v9H1z', '#eceff1') + C(9, 13, 5.500, '#37474f') + L('M2 20h27v4', '#cfd8dc', 2),
      polyline: L('M16 28 4 19 8 5 17 9 25 7v12m-4-4 4 4 4-4', '#f4f4f4', 1.600),
      rect: L('M4.500 4.500h23v23h-23z', '#f4f4f4', 1.600),
      circle: C(16, 16, 12, 'none', '#f4f4f4', 1.600),
      pentagon: L('M16 4 28 13 23 27H9L4 13z', '#f4f4f4', 1.600),
      arc: L('M8 8a12 12 0 0 1 17 17', '#f4f4f4', 1.600),
      text: '<text x="16" y="27" text-anchor="middle" font-family="Liberation Serif, serif" font-size="34" fill="#f4f4f4" stroke="#f4f4f4" stroke-width=".6">T</text>',
      drop: P('M16 2q10 14 10 20 0 8-10 8T6 22Q6 16 16 2z', '#fff8e1') + P('M16 7q7 10 7 15 0 6-7 6t-7-6q0-5 7-15z', '#ffc107'),
      hand: P('M6 14q4-8 12-12l8 4v8q-4 7-10 8l-4 8h-2l2-10-4 3-2-1 3-5-4 1z', '#f4f4f4') + L('m10 17 4-6M13 19l4-6', '#888', 1),
      smooth: P('M23 2 28 6 18 17 13 13z', '#757575') + P('m13 13 5 4-11 8q-3 0-2-3z', '#ddd') + L('M5 27q6 4 11 0t10 1', '#eee', 1.600),
      knife: P('M24 3 28 8 22 14 18 10z', '#ffa726') + L('m19 13-3 3', '#aaa', 3) + P('m15 14 3 3L7 28l-4-3z', '#dde0dc'),
      eraser: P('M20 3 29 10 20 19 12 12z', '#7986cb') + P('m12 12 8 7-8 7H7l-4-5z', '#eceff1'),
      stamper: L('m26 5-10 11', '#ff9800', 5) + P('m8 10 13 12-5 5L3 15z', '#f57c00') + L('m3 16 12 11', '#ffe0b2', 2),
      brushDim: P('M25 3q4 1 2 5l-8 9-4-3z', '#3f3f3f', 'stroke="#222"') + P('m14 15 4 3q-2 6-14 8 5-3 10-11z', '#8a8a8a'),

      exportPath: floppy('#1976d2', '#eceff1') + arrowUp('#fff', '#333'),
      calc: P('M5 2h22v28H5z', '#e8eaf6') + P('M8 4h16v6H8z', blue) + [8, 14, 20].map(x => [12, 18, 24].map(y => P(`M${x} ${y}h4v4h-4z`, '#9fa8da')).join('')).join(''),
      folderMill: folder + `<g transform="translate(5 10) scale(.8 .68)">${helix(17, '#eee', '#666')}</g>`,
      dropTool: P('M13 2h6v9h4l-7 10L9 11h4z', '#f4f4f4') + L('M17 27 27 16v-6', '#ffeb3b', 1.800) + L('M7 19v10M2 24h10', '#f4f4f4', 1.600),
      ruler: P('M1 15 17 5l13 9-14 11z', plate) + P('m1 15 15 10v4L1 19z', plateD) + P('M20 3h7v26h-7z', '#f4f4f4') + L('M24 6h3m-4 3h4m-3 3h3m-4 3h4m-3 3h3m-4 3h4m-3 3h3', '#777', 1),
      binSlab: P('M1 14 16 5l14 9-14 10z', plate) + P('m1 14 15 10v4L1 18z', plateD) + P('M16 15h14l-3 14h-8z', '#ff8a65') + L('M15 15h16M18 14q1-4 5-4t5 4', '#333', 1.500),
      gridFolder: grid9 + P('M15 17h5l2 2h7v10H15z', '#ffe082', 'stroke="#333"'),
      gridSave: grid9 + P('M14 14h15v15H14z', '#1976d2', 'stroke="#333"') + P('M17 14h9v7h-9zM18 24h7v5h-7z', '#fff'),
      moveRot: L('M16 5q11 1 11 11M16 27Q5 26 5 16', '#f4f4f4', 1.500) + L('m15 2 3 3-3 3M17 24l-3 3 3 3M16 9v14M9 16h14M14 11l2-2 2 2M14 21l2 2 2-2M11 14l-2 2 2 2M21 14l2 2-2 2', '#f4f4f4', 1.500),
      merge: L('M5 5h21v6H5', red, 2.500) + L('M26 11v-5M5 28h21v-6H5M26 17H16', '#d1c4e9', 2.500) + L('M5 16h10m-5-5 6 5-6 5', '#f44336', 3),
      redRings: C(16, 8, 3.500, 'none', red) + C(8, 16, 3.500, 'none', '#f4f4f4') + C(24, 16, 3.500, 'none', red) + C(16, 25, 3.500, 'none', red),
      zones: P('M3 3h26v26H3z', plate) + P('M5 5h10v10H5zM17 5h10v10H17zM5 17h10v10H5zM17 17h10v10H17z', '#444') + P('M14 14H7q0-7 7-7zM18 14h7q0-7-7-7zM14 18H7q0 7 7 7zM18 18h7q0 7-7 7z', red),
      clamps: P('M3 10h18v19H3z', plate, 'stroke="#9fa8da"') + L('M3 5h17q6 1 6 7v17', red, 1.500, 'stroke-dasharray="8 2"') + P('M5 2h10v3l-2 2v2H7V7L5 5zM30 15v10h-3l-2-2h-2v-6h2l2-2z', '#f4f4f4'),
      profile: P('M3 3h26v9H21v18H11V12H3z', red) + P('M5 5h22v5h-8v18h-6V10H5z', '#333') + P('M6 6h20v3h-8v18h-4V9H6z', plate),
      celtic: P('M8 1h16v30H8z', '#ffcc80') + L('M11 3q0 3 5 4t5 5-10 8q0 5 5 5t5 4M21 3q0 3-5 4t-5 5 10 8q0 5-5 5t-5 4M11 8l10 8M21 8l-10 8M11 16l10 9M21 16l-10 9', '#333', 1.200),
      raster: P('M4 4h6L4 10zM22 4h6v6zM4 22v6h6zM28 22v6h-6z', plate) + L('M9 5h14M4 12h24M4 19h24M9 27h14', red, 3),
      vcut: P('M3 19h6l7 6 7-6h6v9H3z', plate) + P('M13 2h6v10h5l-8 10-8-10h5z', '#f4f4f4'),
      bevel: P('M9 28q1-6 11-13l9 9v4z', plate) + P('M7 2h6v10h4l-7 10L3 12h4z', '#f4f4f4'),
      inlay: P('M2 21q1-6 8-6 4-5 12-5 9 1 9 6-3 3-8 4-4 2-7 2-1 6-8 6-6-1-6-7z', plateD) + P('M2 20q1-5 8-5 4-5 12-5 8 1 8 5-2 4-8 4-4 2-7 2-1 4-7 4-6-1-6-5z', plate) + E(9, 20, 3, 2, blue) + E(22, 14, 3, 1.800, blue) + P('M5 3h6l-1 11-2 2-2-2z', '#eee', 'stroke="#444" stroke-width=".6"'),
      drill: helix(18, '#26a69a', '#00695c') + C(13, 9, 7, '#333', '#aaa') + L('M13 2v14M6 9h14', '#aaa', 1.300) + C(13, 24, 7, '#333', '#fff') + L('M13 17v14M6 24h14', '#fff', 1.300),
      lattice: slab(16, 19, 14, 9, 2, plate, plateD, blue) + L('m8 19 8-5 8 5-8 5z', blue, 1.500) + P('m6 8 8-1 2-4 6 3 5-1v5l-8 3-2 4-6-3-5 1z', '#ccc', 'stroke="#555" stroke-width=".6"'),
      slope: P('M3 5q8 0 12 12 4 9 9 12H3z', plate) + L('M3 4q9-1 13 12 4 11 12 13', red, 1.500) + P('M23 3h5v18l-2 2-3-1 2-4-2-2 2-4-2-2z', '#f4f4f4'),
      ribs: P('M2 15 16 7 30 15 16 25z', plate) + P('m2 15 14 10v4L2 18z', plateD) + P('m30 15-14 10v4l14-10z', blue) + L('m5 14 12 9M8 12l13 9M12 10l13 9', blue, 1.500) + P('M23 3h5v19l-2 2-3-2z', '#f4f4f4'),
      mills: helix(5, '#26a69a', '#00695c') + helix(17, '#26a69a', '#00695c'),
      nest: P('M3 3h26v26H3z', red) + P('M6 6h20v20H6z', '#333') + P('M8 8h7v16H8zM17 8h7v4h-7zM17 14h7v10h-7z', plate),
      mesh2: L('M7 3v26M13 3v26M19 3v26M25 3v26M3 7h26M3 13h26M3 19h26M3 25h26', red, 2.800),
      arc3d: P('M2 17 14 6q8 0 14 10L18 26q-4-8-16-9z', '#9fa8da') + P('M2 17q12 1 15 9v3L2 20z', plateD) + P('m17 26 12-8v3l-12 8z', blue) + L('M3 15q9 0 12 9M7 11q9 0 12 9M10 8q9 0 12 8', '#f44336', 1.500),
      feature: slab(16, 16, 14, 9, 3, plate, plateD, blue) + P('m2 17 11-8 4 2-4 3 3 2 4-2 3 2-4 3-4-1-4 3 2 3-3 2z', '#f44336') + P('m2 17 8 7v3l-8-7z', '#c62828'),
      zlevel: slab(16, 20, 14, 8, 2, plate, plateD, blue) + slab(16, 13, 14, 9, 3, plate, plateD, blue) + L('m8 13 8-5 8 5-8 5zM11 11l8 5M14 9l8 5', '#f44336', 1.400),
      drill3d: slab(16, 18, 14, 9, 3, plate, plateD, blue) + E(17, 17, 7, 4, plateD) + P('M14 3h5v9h4l-6 7-6-7h3z', '#e53935'),
      star3d: L('m2 20 10 1 6 9 4-7 8-3', '#e53935', 1.600) + P('m2 14 10 4 6 9 4-8 8-4v4l-8 3-4 7-6-9-10-2z', plateD) + P('m7 5 8 4 9-4 0 6 6 4-8 3-4 9-6-9-10-3 6-4z', plate) + L('m2 18 10 2 6 9 4-7 8-3', '#f44336', 1),
      view3d: P('m12 6 17 9-10 8z', plateD) + C(13, 17, 11, plate, '#fff', 1.600) + L('m4 21 16-9M7 24l16-9', blue, 2)
    }

    const flagMark = '<svg class="absolute right-0 bottom-0 size-[7px]" viewBox="0 0 7 7"><path d="M7 0v7H0z" fill="#6a6a6a"/></svg>'
    const svg = (name) => `<svg class="size-8" viewBox="0 0 32 32">${icons[name]}</svg>`

    // "name*" has a fly-out mark, "name!" is pressed, "|" separator, "#" gripper
    const bar = (id, items, vertical) => {
      document.getElementById(id).innerHTML = items.split(' ').map(item => {
        if (item === '|') return vertical ? '<span class="mt-[3px] mb-1 h-px w-10 bg-[#5b5b5b]"></span>' : '<span class="mr-1 ml-[3px] h-[38px] w-px bg-[#5b5b5b]"></span>'
        if (item === '#') return '<span class="ml-[6px] mr-[3px] h-[38px] w-[3px] bg-[#5b5b5b]"></span>'
        if (item === '#s') return '<span class="ml-[3px] mr-1 h-[38px] w-[3px] bg-[#5b5b5b]"></span>'
        const name = item.replace(/[*!]/, '')
        const mark = item.endsWith('*') ? flagMark : ''
        return item.endsWith('!')
          ? `<button aria-label="${name}" class="relative grid size-10 shrink-0 place-items-center border border-[#5b5b5b] bg-[#1b1b1b]">${svg(name)}</button>`
          : `<button aria-label="${name}" class="relative grid size-10 shrink-0 place-items-center">${svg(name)}${mark}</button>`
      }).join('')
    }

    bar('bar-file', '#s doc* folder save | cut copy paste | undo redo | notes # resize* mirror* palette lamp badge # folderStar fork trim fillet flower greenRing bumps maze cards yellowRing # rings wave zigzag # fillDim ringDim swatches* # cone slab1 slab2 folderIn saveDim starDim slabDim bucketDim partsDim')
    bar('bar-relief', '#s zoomBox orbit # bluePyramid roll* tent peaks knot relief ridge folderFill* # blueSlab* fold stripes layersUp ringSlab* yellowHole* holeDim dotDim swap flag curve stamp cut4 stack # plus pouch hatchStar* morph* arch groupDim* weldDim* taperDim* slotDim* centerDim*')
    bar('bar-view', '#s cubeRed cubeLeft cubeRight cubeTop | zoomIn* | bulb | whiteSlab! axes! puzzle pipe block! millDim shapes! blueStar! blueRed! redBlue | goldSlab! bitmap starZoom pyramid rainbow')
    bar('tools', 'cursor! node moveDim mesh | pencil* bucket* tape* | polyline rect circle* pentagon* arc text | drop hand smooth knife eraser stamper brushDim', true)

    document.getElementById('bar-view').insertAdjacentHTML('beforeend',
      '<input type="range" value="100" aria-label="Прозрачность" class="ml-2 h-5 w-[128px] appearance-none bg-[linear-gradient(#f4f4f4,#f4f4f4)] bg-[length:100%_4px] bg-center bg-no-repeat [&::-webkit-slider-thumb]:h-5 [&::-webkit-slider-thumb]:w-2 [&::-webkit-slider-thumb]:appearance-none [&::-webkit-slider-thumb]:border [&::-webkit-slider-thumb]:border-[#555] [&::-webkit-slider-thumb]:bg-[#f4f4f4]">')

    document.getElementById('menu').innerHTML = ['Файл', 'Правка', 'Вид', 'Модель', 'Вектор', 'Растр', 'Рельеф', 'Траектория', '3D-печать', 'Окно', 'Справка']
      .map(name => `<button class="px-[6px]">${name}</button>`).join('')

    // ---- project tree ----
    const small = {
      doc: P('M2 0h8l4 4v12H2z', '#eceff1') + P('M10 0v4h4z', '#90a4ae'),
      shapes: L('M1 1h9v9H1z', '#ddd', 1.200) + C(10.500, 10.500, 5, '#333', '#ddd', 1.200) + L('M10 6v5H6', '#ddd', 1.200),
      bitmap: P('M0 0h10v10H0z', '#558b2f') + C(10, 10, 5.800, '#8bc34a', '#4f6f30', .6),
      star: P(starPath(8, 8.500, 8.500), '#ffc928'),
      starBlue: P(starPath(8, 8.500, 8.500), '#29b6f6'),
      sheets: P('M0 0h7v7H0zM9 0h7v7H9zM9 9h7v7H9z', '#f4f4f4'),
      mill: P('M5 1h6v14H5z', '#f4f4f4') + L('m4 5 8-3M4 9l8-3M4 13l8-3', '#444', 1.500),
      plus: L('M8 1v14M1 8h14', '#f4f4f4', 2),
      grid: L('M4 0v7M.5 3.500h7M12 0v7M8.500 3.500h7M4 9v7M.5 12.500h7M12 9v7M8.500 12.500h7', '#eee', 1.200),
      on: P('M10.500 0q6 0 5 6-1 3-3 8h-3L7 7q-1-6 3.500-7z', '#ffca28') + P('M5 2q5 1 4 6l-2 7H4Q0 10 0 7q0-4 5-5z', '#ffca28', 'stroke="#e0a800" stroke-width=".5"') + L('M4 15.500h3M9.500 14.500h3', '#8d6e63', 1.500),
      dim: P('M10.500 0q6 0 5 6-1 3-3 8h-3L7 7q-1-6 3.500-7z', '#b0bec5') + P('M5 2q5 1 4 6l-2 7H4Q0 10 0 7q0-4 5-5z', '#b0bec5', 'stroke="#8d9ba2" stroke-width=".5"') + L('M4 15.500h3M9.500 14.500h3', '#8d6e63', 1.500),
      off: L('M11 1q5 0 4 5-1 3-3 8h-2L7.500 7Q7 1 11 1zM5 3q4 1 4 5l-2 6H4Q1 10 1 7q0-3 4-4z', '#d4a91f', 1.200) + L('M4 15.500h3M9.500 14.500h3', '#8d6e63', 1.500)
    }
    const mini = (name) => `<svg class="size-4 shrink-0" viewBox="0 0 16 16">${small[name] || ''}</svg>`
    const rows = [
      ['Векторы', 'shapes', 'plus off'],
      ['Растр', 'bitmap', 'plus on'],
      ['Лицевой рельеф', 'star', 'plus grid on', 'font-bold text-[#ffeb3b]'],
      ['Обратный рельеф', 'star', 'plus grid on'],
      ['Шаблон', 'starBlue', 'on'],
      ['Листы', 'sheets', 'plus'],
      ['Траектории', 'mill', 'off dim on', 'bg-[#5b5b5b]']
    ]
    document.getElementById('tree').innerHTML =
      `<li class="mt-[2px] flex h-5 items-center gap-1 pl-[5px]">${mini('doc')}(Без имени)</li>` +
      rows.map(([label, icon, actions, style = '']) => `
        <li class="flex h-5 items-center pl-[15px]">
          <svg class="mr-[7px] h-[9px] w-[6px]" viewBox="0 0 6 9" fill="none" stroke="#fff">${icon === 'starBlue' ? '' : '<path d="M.5.500v8l4.500-4z"/>'}</svg>
          ${mini(icon)}
          <div class="ml-[5px] flex h-5 flex-1 items-center ${style}">
            <span>${label}</span>
            <div class="mr-1 ml-auto flex gap-[6px]">${actions.split(' ').map(mini).join('')}</div>
          </div>
        </li>`).join('')

    // ---- toolpath groups ----
    const groups = [
      ['Операции с траекторией', 'exportPath calc notes folderMill dropTool ruler binSlab gridFolder gridSave moveRot merge redRings zones clamps'],
      ['2D траектории', 'profile celtic raster vcut bevel inlay drill lattice slope ribs mills nest mesh2'],
      ['3D траектории', 'arc3d feature zlevel drill3d star3d view3d']
    ]
    document.getElementById('paths').innerHTML = groups.map(([title, names]) => `
      <section class="h-[161px]">
        <h3 class="flex h-[17px] items-center justify-between bg-[#315689] pr-[2px] pl-[5px] text-[13px] leading-[17px]">${title}
          <svg class="mr-px h-[5px] w-[9px]" viewBox="0 0 9 5" fill="none" stroke="#fff" stroke-width="1.400"><path d="m0 5 4.500-4.500L9 5"/></svg></h3>
        <div class="-mt-px -ml-px grid grid-cols-[repeat(5,49px)] auto-rows-[46px] place-items-center">${names.split(' ').map(name =>
          name === 'zones'
            ? `<button aria-label="${name}" class="grid h-[42px] w-11 place-items-center bg-[#5b5b5b]">${svg(name)}</button>`
            : `<button aria-label="${name}" class="grid h-[42px] w-11 place-items-center">${svg(name)}</button>`).join('')}</div>
      </section>`).join('')
  </script>
</body>
</html>
